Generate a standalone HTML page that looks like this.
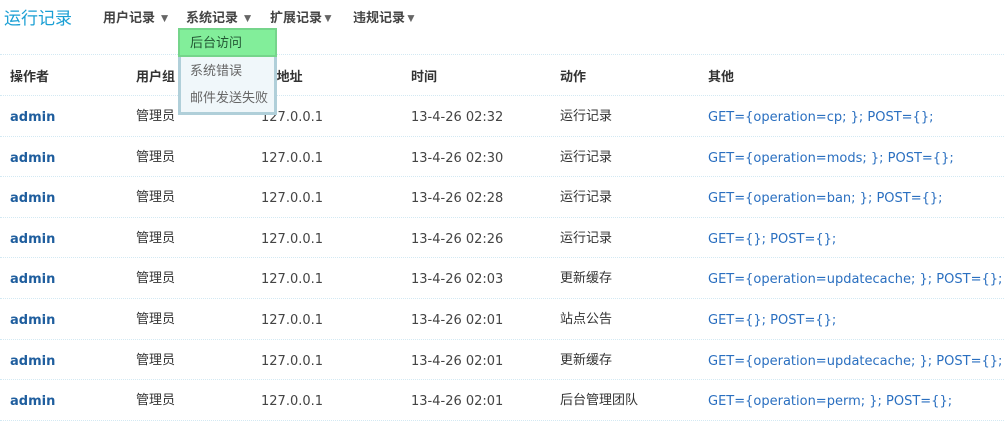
<!DOCTYPE html>
<html><head><meta charset="utf-8"><style>
body{margin:0;width:1004px;height:427px;overflow:hidden;background:#fff;font-family:"DejaVu Sans","Liberation Sans","Noto Sans CJK SC",sans-serif;font-size:13px;color:#444;position:relative}
.a{position:absolute;white-space:nowrap}
.t{left:4px;top:4px;font-size:17px;color:#1a9fd4;font-family:"Liberation Sans","Noto Sans CJK SC",sans-serif}
.n{top:7px;font-weight:bold;color:#444;font-size:13px;font-family:"Liberation Sans","Noto Sans CJK SC",sans-serif}
.n i{font-style:normal;color:#666;font-size:12px}
.line{position:absolute;left:0;width:1004px;border-top:1px dotted #d3e9f3}
.h{font-weight:bold;color:#333;font-family:"Liberation Sans","Noto Sans CJK SC",sans-serif;font-size:13px}
.adm{font-weight:bold;color:#1f5e9e}
.cn{font-family:"Liberation Sans","Noto Sans CJK SC",sans-serif;color:#333}
.lk{color:#2a6fc0}
.dd{position:absolute;left:178px;top:28px;width:93px;height:81px;border:3px solid #b0cfd9;background:#f0f7fa}
.dd div{height:27px;line-height:27px;padding-left:9px;color:#666;font-family:"Liberation Sans","Noto Sans CJK SC",sans-serif}
.dd .s{background:#82ee9a;color:#225533;border:2px solid #75d58b;height:25px;line-height:25px;margin:-3px -3px 0 -3px;padding-left:10px}
</style></head><body>
<div class="a t">运行记录</div>
<div class="a n" style="left:103px">用户记录 <i>▼</i></div>
<div class="a n" style="left:186px">系统记录 <i>▼</i></div>
<div class="a n" style="left:270px">扩展记录<i>▼</i></div>
<div class="a n" style="left:353px">违规记录<i>▼</i></div>
<div class="line" style="top:54px"></div>
<div class="a h" style="left:10px;top:66px">操作者</div>
<div class="a h" style="left:136px;top:66px">用户组</div>
<div class="a h" style="left:261px;top:66px"><span style="color:#ddd">IP</span> 地址</div>
<div class="a h" style="left:411px;top:66px">时间</div>
<div class="a h" style="left:560px;top:66px">动作</div>
<div class="a h" style="left:708px;top:66px">其他</div>
<div id="rows"></div>
<script>
var d=[["13-4-26 02:32","运行记录","GET={operation=cp; }; POST={};"],["13-4-26 02:30","运行记录","GET={operation=mods; }; POST={};"],["13-4-26 02:28","运行记录","GET={operation=ban; }; POST={};"],["13-4-26 02:26","运行记录","GET={}; POST={};"],["13-4-26 02:03","更新缓存","GET={operation=updatecache; }; POST={};"],["13-4-26 02:01","站点公告","GET={}; POST={};"],["13-4-26 02:01","更新缓存","GET={operation=updatecache; }; POST={};"],["13-4-26 02:01","后台管理团队","GET={operation=perm; }; POST={};"]];
var h="";
for(var i=0;i<d.length;i++){var y=108+i*40.6,l=95+i*40.6;
h+='<div class="line" style="top:'+l+'px"></div>';
h+='<div class="a adm" style="left:10px;top:'+(y+2)+'px">admin</div>';
h+='<div class="a cn" style="left:136px;top:'+(y-3)+'px">管理员</div>';
h+='<div class="a" style="left:261px;top:'+(y+2)+'px">127.0.0.1</div>';
h+='<div class="a" style="left:411px;top:'+(y+2)+'px">'+d[i][0]+'</div>';
h+='<div class="a cn" style="left:560px;top:'+(y-3)+'px">'+d[i][1]+'</div>';
h+='<div class="a lk" style="left:708px;top:'+(y+2)+'px">'+d[i][2]+'</div>';}
h+='<div class="line" style="top:420px"></div>';
document.getElementById("rows").innerHTML=h;
</script>
<div class="dd"><div class="s">后台访问</div><div>系统错误</div><div>邮件发送失败</div></div>
</body></html>
